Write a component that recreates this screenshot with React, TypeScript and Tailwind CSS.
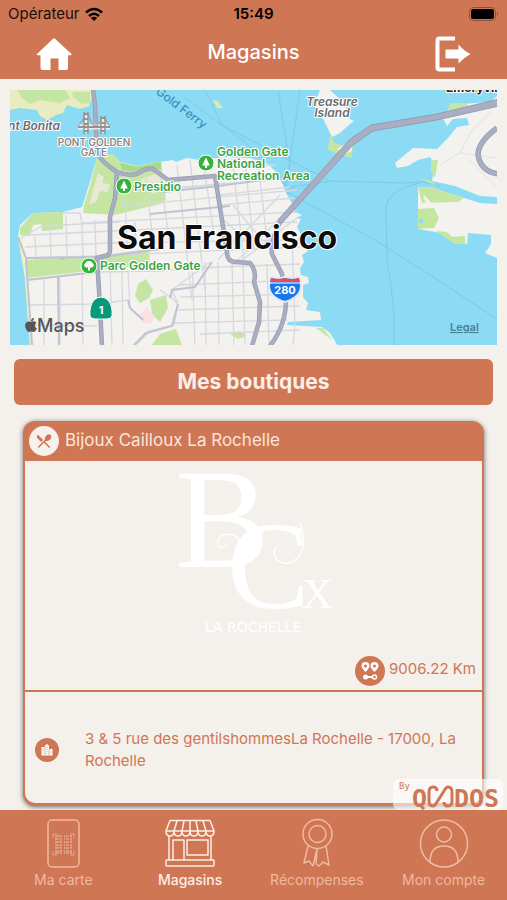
import type { ReactNode } from "react";
import { FaApple } from "react-icons/fa";
import { MdRestaurantMenu } from "react-icons/md";

const LAND = "#f3f2ee";
const PARK = "#c5e5a3";
const STREET = "#d6d8e0";
const ROAD = "#aaaec2";
const ROAD_EDGE = "#979cb2";

const sfCoast =
  "M97 158 L104 154 L113 154 L120 162 L137 166 L160 162 L173 160 L176 162 L187 158 L200 160 L225 157 L250 158 L268 164 L276 172 L283 185 L287 195 L293 205 L295 212 L302 215 L296 218 L301 219 L297 227 L301 235 L298 240 L308 251 L302 255 L304 262 L300 268 L301 275 L308 277 L309 283 L303 285 L303 297 L308 303 L306 310 L320 312 L321 320 L288 322 L287 325 L322 327 L330 333 L338 346 L30 346 L25 278 L18 237 L20 225 L33 213 L63 212 L82 207 L88 188 Z";

const majorRoads = [
  "M93 90 L95 105 L97 152 Q101 162 117 172 Q128 176 137 174 Q145 168 153 169 L168 180 L215 176 L227 252 Q227 262 236 262 L250 263 Q257 271 254 282 L260 302 L259 322 L252 346",
  "M117 172 L115 198 L110 217 L110 250 Q110 256 104 256 L97 258 L99 290 L102 346",
  "M350 143 L280 222 Q270 242 272 254 L282 274 L286 300 Q286 325 270 346",
];

const minorRoads = [
  "M63 213 L80 213 L82 223 L297 212 M30 235 L297 222 M21 238 L42 226 L120 222 M25 247 L110 243 L300 240 M26 258 L97 256 L300 247",
  "M26 280 L97 272 L160 271 L196 268 L300 264 M28 305 L97 304 L128 300 M60 276 L60 346 M44 278 L44 346 M82 275 L83 346 M28 325 L97 326",
  "M145 172 L152 232 M160 175 L170 245 M177 165 L192 300 M190 160 L205 290 M203 160 L214 235 M232 158 L244 260 M245 160 L254 250 M258 163 L267 240",
  "M120 192 L300 178 M120 206 L297 190 M165 190 L225 183 M219 168 L276 165 M219 195 L290 187 M222 205 L294 198",
  "M218 260 L280 195 M230 268 L293 205 M240 262 L298 217 M245 240 L220 216 M262 240 L233 205",
  "M128 272 L130 308 L143 319 M160 290 L172 298 L178 304 L174 325 L150 331 L135 346 M172 290 L210 262 M172 290 L178 304 M178 270 L196 262",
  "M192 262 L195 346 M205 262 L206 346 M218 262 L219 346 M232 262 L234 346 M243 262 L245 346 M267 264 L269 346 M292 235 L295 325 L293 346",
  "M180 285 L300 280 M180 297 L300 294 M178 310 L300 306 M174 323 L287 320 M200 334 L300 330",
  "M66 215 L67 256 M82 223 L83 256 M95 220 L96 256 M35 237 L36 258 M50 228 L51 258 M122 272 L123 346 M110 262 L112 346 M135 222 L136 246 M125 200 L127 246",
];

function ParkPin({ x, y, round }: { x: number; y: number; round?: boolean }) {
  return (
    <g transform={`translate(${x} ${y})`}>
      <circle r="8" fill="#35b33c" stroke="#fff" strokeWidth="1" />
      {round ? (
        <path d="M-1 4.500V1.500H-3a2.300 2.300 0 0 1-1-4 4.300 4.300 0 0 1 8 0 2.300 2.300 0 0 1-1 4H1v3z" fill="#fff" />
      ) : (
        <path d="M0-5.500 3.800 2.500H1V5H-1V2.500H-3.800z" fill="#fff" />
      )}
    </g>
  );
}

function StoreMap() {
  return (
    <svg
      viewBox="10 90 487 255"
      className="block w-full font-[Inter,sans-serif]"
      role="img"
      aria-label="San Francisco"
    >
      <rect x="10" y="90" width="487" height="255" fill="#8bdbf5" />

      {/* ferry lines */}
      <g fill="none" stroke="#7bcae7" strokeWidth="1">
        <path d="M205 90 L222 125 L285 158 L330 181 L405 183 Q425 180 440 186" />
        <path d="M278 90 L290 165 L283 190 L375 240 L430 275 L497 319" />
        <path d="M300 90 L290 160 L286 188 L330 181" />
        <path d="M420 183 Q386 190 386 210 L387 260 Q396 310 394 345" />
        <path d="M185 98 L245 142 L290 190" />
      </g>

      {/* north headlands */}
      <path d="M10 90 H93 L92 98 L89 106 L80 109 L67 105 L63 113 L56 115 L47 120 L40 116 L37 110 L20 108 L10 110Z" fill="#e9ecc0" />
      <path d="M17 90 H65 L70 98 L60 103 L40 100 L30 104 L22 98Z" fill={PARK} />
      <path d="M72 92 L90 92 L90 103 L82 104 L73 97Z" fill={PARK} />
      <path d="M213 100 L218 101 L223 108 L217 108Z" fill="#dcebaa" />

      {/* city */}
      <path d={sfCoast} fill={LAND} />
      <path d="M18 237 L22 238 L34 346 H30 L25 278Z" fill="#f2edc4" />
      <path d="M97 158 L104 154 L113 154 L120 162 L137 166 L161 161 L163 180 L166 200 L160 204 L115 215 L83 213 L84 205 L90 186Z" fill={PARK} />
      <path d="M120 163 L137 167 L161 162 L161 169 L137 172 L122 170Z" fill="#a6d98c" />
      <path d="M98 173 L104 177 L102 183 L110 184 L108 192 L100 191 L96 202 L89 205 L93 190Z M140 180 L160 172 L164 190 L152 194Z" fill="#e6e9d3" />
      <path d="M20 228 L33 213 L63 212 L63 229 L42 231 L41 224 L33 225 L30 236 L20 235Z" fill={PARK} />
      <path d="M25 260 L95 256 L149 249 L150 265 L97 270 L27 278Z" fill={PARK} />
      <path d="M138 284 L146 279 L153 290 L149 298 L140 303 L135 296Z M150 300 L166 295 L168 308 L160 322 L152 314Z" fill={PARK} />
      <path d="M140 314 L147 307 L155 317 L150 324 L142 323Z" fill="#fbdfe2" />
      <path d="M160 334 L176 329 L182 345 H152Z M230 334 L240 331 L247 336 L238 339Z M316 328 L323 328 L332 340Z" fill={PARK} />
      <path d="M60 257 h5 v3 h-5z M84 258 l6 1 -2 2z" fill="#8bdbf5" />
      <g fill="none" stroke={STREET} strokeWidth="1.300">
        {minorRoads.map((d) => (
          <path key={d} d={d} />
        ))}
      </g>
      <path d="M163 192 L219 186 L290 176 M150 214 L230 206 M97 258 L160 249 M26 258 L97 257 M27 280 L97 272 M18 237 L26 258 L32 346 M58 277 L59 346 M178 304 L172 326 L146 333 L133 346 M128 300 L130 308 L143 320 M170 298 L172 290 L195 287 L212 262" fill="none" stroke="#c0c3d2" strokeWidth="2" />

      {/* islands and the east bay */}
      <path d="M320 90 L315 102 L332 137 L340 133 L350 124 L354 121 L348 118 L346 105 L330 90Z" fill={LAND} />
      <path d="M330 135 L328 150 L340 155 L352 158 L353 142 L349 140 L343 146 L335 143Z" fill={PARK} />
      <path d="M337 149 L345 144 L352 141 L352 151 L345 154Z" fill={LAND} />
      <path d="M497 96 L490 102 L462 104 L450 105 L447 112 L438 117 L444 120 L447 126 L453 119 L467 118 L469 125 L457 127 L448 138 L437 149 L413 148 L395 163 L397 168 L408 166 L418 160 L430 157 L435 165 L432 181 L455 186 L480 196 L497 197Z" fill={LAND} />
      <path d="M450 103 L465 103 L470 107 L448 112Z M431 160 L438 160 L435 178 L431 171Z M418 178 L432 181 L437 186Z" fill={PARK} />
      <path d="M418 187 L430 187 L480 203 L497 204 V258 L485 253 L491 244 V235 L468 233 L467 244 L453 243 L447 234 L418 229Z" fill={LAND} />
      <path d="M418 187 L430 187 L464 198 L458 202 L422 203Z M418 209 L434 208 L439 218 L434 228 L418 229Z M436 231 L447 232 L452 237 L465 236 L465 244 L453 243Z" fill={PARK} />
      <path d="M424 196 L430 203 L428 206Z" fill={LAND} stroke={LAND} strokeWidth="2" />
      <path d="M419 219 h4 v4 h-4z" fill="#8bdbf5" />
      <path d="M440 165 L460 153 L497 158 M460 153 L472 130 L490 112 M470 160 L484 175 L497 188" fill="none" stroke="#e0e1e5" strokeWidth="1" />

      <g fill="none" strokeLinejoin="round">
        {majorRoads.map((d) => (
          <path key={d} d={d} stroke={ROAD_EDGE} strokeWidth="4.500" />
        ))}
        {majorRoads.map((d) => (
          <path key={d} d={d} stroke={ROAD} strokeWidth="3" />
        ))}
        <path d="M497 128 Q478 142 478 155 Q481 172 499 174" stroke={ROAD_EDGE} strokeWidth="5.500" />
        <path d="M497 128 Q478 142 478 155 Q481 172 499 174" stroke={ROAD} strokeWidth="4" />
      </g>
      <path d="M499 99 L437 114 L371 125 L349 140 L278 220 L282 223 L353 145 L373 131 L437 120 L499 106Z" fill={ROAD} stroke={ROAD_EDGE} strokeWidth="1" />

      {/* bridge symbol */}
      <g fill="none" stroke="#fff" strokeWidth="5" opacity="0.700">
        <path d="M78 127 H110 M86 113 V133 M103 117 V133" />
      </g>
      <g fill="none" stroke="#9b918c">
        <path d="M78 127 H110" strokeWidth="2" />
        <path d="M84 112 V134 M88 112 V134 M101 116 V134 M105 116 V134" strokeWidth="1.500" />
        <path d="M84 114 h4 M84 119 h4 M84 124 h4 M84 131 h4 M101 118 h4 M101 123 h4 M101 131 h4" strokeWidth="2" />
        <path d="M78 126 Q83 122 85 114 M88 114 Q92 126 95 126 Q99 126 102 117 M105 117 Q107 124 110 126" strokeWidth="1" />
      </g>

      <g stroke="#fff" strokeWidth="2" strokeLinejoin="round" paintOrder="stroke">
        <g fontSize="10" fontWeight="600" fill="#8e8683" textAnchor="middle">
          <text x="94" y="146">PONT GOLDEN</text>
          <text x="94" y="156">GATE</text>
        </g>
        <g fontSize="12" fontWeight="600" fill="#39a445">
          <text x="217" y="156">Golden Gate</text>
          <text x="217" y="168">National</text>
          <text x="217" y="180">Recreation Area</text>
          <text x="134" y="191">Presidio</text>
          <text x="100" y="270">Parc Golden Gate</text>
        </g>
        <g fontSize="12" fontWeight="600" fontStyle="italic" fill="#6a6c72">
          <text x="60" y="130" textAnchor="end">nt Bonita</text>
          <text x="332" y="106" textAnchor="middle">Treasure</text>
          <text x="332" y="117" textAnchor="middle">Island</text>
        </g>
        <text x="446" y="92" fontSize="12" fontWeight="700" fill="#222">Emeryville</text>
        <text x="227" y="249" fontSize="32" fontWeight="700" fill="#0c0c0c" textAnchor="middle">
          San Francisco
        </text>
      </g>
      <text transform="translate(155 93) rotate(37)" fontSize="12" fontWeight="500" fill="#3d8fbe">
        Gold Ferry
      </text>

      <ParkPin x={206} y={163} />
      <ParkPin x={124} y={186} />
      <ParkPin x={89} y={266} round />

      {/* route shields */}
      <path d="M94 300 Q101 294 108 300 Q113 306 112 316 Q111 319 107 319 H95 Q91 319 90 316 Q89 306 94 300Z" fill="#07997c" stroke="#fff" strokeWidth="1" />
      <text x="101" y="314" fontSize="11" fontWeight="700" fill="#fff" textAnchor="middle">1</text>
      <path d="M271 277 Q278 279 285 277 Q292 279 299 277 Q303 287 299 293 Q295 299 285 302 Q275 299 271 293 Q267 287 271 277Z" fill="#1a76ee" stroke="#dbe9fb" strokeWidth="2" />
      <path d="M271 278 Q278 280 285 278 Q292 280 299 278 L300 282 H270Z" fill="#ee4a4e" />
      <path d="M269 283 H301" stroke="#fff" strokeWidth="1" />
      <text x="285" y="294" fontSize="11" fontWeight="700" fill="#fff" textAnchor="middle">280</text>

      <FaApple x={23} y={317} width={14} height={16} color="#55565a" />
      <text x="37" y="332" fontSize="18" fontWeight="500" fill="#55565a">Maps</text>
      <a href="#legal">
        <text x="450" y="331" fontSize="11" fontWeight="600" fill="#4e8095" textDecoration="underline">
          Legal
        </text>
      </a>
    </svg>
  );
}

function StatusBar() {
  return (
    <div className="grid h-7 grid-cols-3 items-center px-2 text-[15px] text-[#1c0f0a]">
      <div className="flex items-center gap-1">
        Opérateur
        <svg viewBox="0 0 20 15" className="h-[15px] w-5" fill="none" stroke="#000" aria-hidden="true">
          <path d="M2 5.500 Q10-1.500 18 5.500" strokeWidth="2.500" />
          <path d="M5 9 Q10 4.500 15 9" strokeWidth="2.500" />
          <path d="M10 14 L6.800 11 Q10 8.300 13.200 11Z" fill="#000" stroke="none" />
        </svg>
      </div>
      <div className="text-center font-semibold text-black">15:49</div>
      <svg viewBox="0 0 30 14" className="h-3.5 w-[30px] justify-self-end" aria-hidden="true">
        <rect x="0.500" y="0.500" width="26" height="13" rx="4" fill="none" stroke="#8c4f38" />
        <rect x="2" y="2" width="23" height="10" rx="2.500" />
        <path d="M28 5 Q30 7 28 9Z" fill="#8c4f38" />
      </svg>
    </div>
  );
}

function Header() {
  return (
    <header className="shrink-0 bg-[#cf7654]">
      <StatusBar />
      <div className="flex h-[51px] items-center justify-between px-9 text-white">
        <button type="button" aria-label="Accueil">
          <svg viewBox="0 0 36 34" className="h-[34px] w-9" fill="currentColor">
            <path d="M17.300 1.500 Q18 1 18.700 1.500 L35.500 17 Q36 18 35 18.200 H32 V31 Q32 33 30 33 H22.500 V21.500 H14.500 V33 H6.500 Q4.500 33 4.500 31 V18.200 H1.500 Q0 18 1 17Z" />
          </svg>
        </button>
        <h1 className="pb-1 text-xl font-medium">Magasins</h1>
        <button type="button" aria-label="Déconnexion">
          <svg viewBox="0 0 36 36" className="size-9" fill="none" stroke="currentColor">
            <path d="M20 2.500 H4.500 Q2.500 2.500 2.500 4.500 V31.500 Q2.500 33.500 4.500 33.500 H20" strokeWidth="4" />
            <path d="M10.500 13.500 H23.500 V8.500 Q29 15 35.500 18 Q29 21.500 23.500 27.500 V22.500 H10.500Z" fill="currentColor" stroke="none" />
          </svg>
        </button>
      </div>
    </header>
  );
}

function BrandLogo() {
  return (
    <svg viewBox="0 0 170 180" className="h-[180px] w-[170px] overflow-visible" fill="#fff" fontFamily="'Liberation Serif', serif">
      <text x="6" y="106" fontSize="142">B</text>
      <text x="58" y="147" fontSize="124">C</text>
      <text x="133" y="147" fontSize="43">X</text>
      <g fill="none" stroke="#fff" strokeWidth="1.500">
        <path d="M72 92 Q74 75 60 73 Q46 75 49 84 Q54 90 58 83" />
        <path d="M131 62 Q138 82 131 94 Q120 108 108 99 Q102 91 108 86" />
      </g>
      <text x="84" y="171" fontSize="14" textAnchor="middle" fontFamily="'DejaVu Sans', sans-serif">
        LA ROCHELLE
      </text>
    </svg>
  );
}

function DistanceIcon() {
  return (
    <svg viewBox="0 0 30 30" className="size-[30px]" aria-hidden="true">
      <circle cx="15" cy="15" r="15" fill="#cf7654" />
      <g fill="#fff">
        <path d="M10.500 16 Q6.500 12 6.500 10 a4 4 0 0 1 8 0 Q14.500 12 10.500 16Z M19.500 16 Q15.500 12 15.500 10 a4 4 0 0 1 8 0 Q23.500 12 19.500 16Z" />
        <circle cx="10.500" cy="21" r="2.500" />
      </g>
      <path d="M10 21 H18" stroke="#fff" strokeWidth="2" />
      <circle cx="19.500" cy="21" r="2" fill="none" stroke="#fff" strokeWidth="1.500" />
      <circle cx="10.500" cy="10" r="1.500" fill="#cf7654" />
      <circle cx="19.500" cy="10" r="1.500" fill="#cf7654" />
    </svg>
  );
}

function CityIcon() {
  return (
    <svg viewBox="0 0 24 24" className="size-6 shrink-0" aria-hidden="true">
      <circle cx="12" cy="12" r="12" fill="#cf7654" />
      <path d="M6.500 9 H10 V7.500 L12 6 L14 7.500 V11 H17.500 V17.500 H6.500Z" fill="#fff" />
      <path d="M10 9 V17 M14 11 V17" stroke="#cf7654" strokeWidth="0.600" />
      <path d="M8.200 10.500 V16 M12 9 V16 M15.800 12.500 V16" stroke="#cf7654" strokeWidth="0.600" strokeDasharray="1 1" />
    </svg>
  );
}

function StoreCard() {
  return (
    <article className="mx-[13px] mt-4 overflow-hidden rounded-xl bg-[#cf7654] px-[2px] pb-[3px] text-[#cf7654] shadow-[0_1px_5px_rgba(0,0,0,0.55)]">
      <div className="flex h-10 items-center gap-1.5 px-1 text-[#f8e6dd]">
        <span className="flex size-[30px] items-center justify-center rounded-full bg-[#f7f1ee] text-[#cf7654]">
          <MdRestaurantMenu className="size-[18px]" />
        </span>
        <h3 className="text-[17px]">Bijoux Cailloux La Rochelle</h3>
      </div>
      <div className="flex h-[229px] flex-col items-center bg-[#f4f0ec]">
        <BrandLogo />
        <div className="mt-auto flex items-center gap-1 self-end pr-1.5 pb-1 text-[15px]">
          <DistanceIcon />
          <span className="pb-1">9006.22 Km</span>
        </div>
      </div>
      <div className="mt-[2px] flex h-[111px] items-center gap-[26px] rounded-b-[10px] bg-[#f4f0ec] pt-2 pr-6 pb-1 pl-2.5">
        <CityIcon />
        <p className="text-[15px] leading-[22px]">
          3 &amp; 5 rue des gentilshommesLa Rochelle - 17000, La Rochelle
        </p>
      </div>
    </article>
  );
}

function QoodosBadge() {
  return (
    <div className="absolute right-1 bottom-0 rounded-md bg-white/60">
      <svg viewBox="0 0 110 31" className="h-[31px] w-[110px]" fill="#cf7654" fontFamily="'DejaVu Sans Mono', monospace">
        <text x="6" y="10" fontSize="9">By</text>
        <text x="19" y="28" fontSize="25" fontWeight="700">Q</text>
        <path d="M44 12 Q44 8 40 8 Q36 8 36 13 V22 Q36 27 40 27 Q42 27 44 23 L51 12 Q53 8 55 8 Q59 8 59 13 V22 Q59 27 55 27 Q51 27 51 23" fill="none" stroke="#cf7654" strokeWidth="3" />
        <text x="61" y="28" fontSize="25" fontWeight="700">DOS</text>
      </svg>
    </div>
  );
}

function TabIcon({ children }: { children: ReactNode }) {
  return (
    <svg viewBox="0 0 50 50" className="size-[50px]" fill="none" stroke="currentColor" strokeWidth="2" strokeLinejoin="round" aria-hidden="true">
      {children}
    </svg>
  );
}

const tabs = [
  {
    label: "Ma carte",
    icon: (
      <>
        <rect x="10" y="2" width="31" height="47" rx="4" strokeWidth="1.500" />
        <path d="M15 20 V16 H19 M32 16 H36 V20 M15 33 V37 H19 M32 37 H36 V33" strokeWidth="1" opacity="0.700" />
        <path d="M17 18 H34 M17 21 H34 M17 24 H34 M17 27 H34 M17 30 H34 M17 33 H34 M17 35 H34" strokeWidth="2" strokeDasharray="4 1 2 2 1 1 3 1" opacity="0.500" />
        <path d="M18 18 V35 M22 17 V36 M27 18 V35 M33 17 V36" strokeWidth="1" strokeDasharray="3 2" opacity="0.500" />
      </>
    ),
  },
  {
    label: "Magasins",
    active: true,
    icon: (
      <>
        <path d="M5 2.500 H45 L49 13 Q49 18 45 18 Q41 18 41 13 Q41 18 37 18 Q33 18 33 13 Q33 18 29 18 Q25 18 25 13 Q25 18 21 18 Q17 18 17 13 Q17 18 13 18 Q9 18 9 13 Q9 18 5 18 Q1 18 1 13Z M1 13 H49 M12 3 L9 13 M19 3 L17 13 M25 3 V13 M31 3 L33 13 M38 3 L41 13" strokeWidth="1.500" />
        <path d="M4 18 V42 M46 18 V42 M8 42 V22 H19 V42 M22 22 H43 V37 H22Z" strokeWidth="1.500" />
        <rect x="1" y="42" width="48" height="6" rx="1" strokeWidth="1.500" />
      </>
    ),
  },
  {
    label: "Récompenses",
    icon: (
      <>
        <circle cx="25.500" cy="16" r="14.500" strokeWidth="1.500" />
        <circle cx="25.500" cy="16" r="8.500" strokeWidth="1.500" />
        <path d="M16 28 L12 45 L17 43 L21 48 L25 31 M25 31 L24 46 L27 48 L31 44 L37 47 L34 28" strokeWidth="1.500" />
      </>
    ),
  },
  {
    label: "Mon compte",
    icon: (
      <>
        <circle cx="25" cy="25.500" r="23.500" strokeWidth="1.500" />
        <circle cx="25" cy="16.500" r="7.500" strokeWidth="1.500" />
        <path d="M11 44 Q11 28 25 28 Q39 28 39 44" strokeWidth="1.500" />
      </>
    ),
  },
];

export default function App() {
  return (
    <div className="flex h-dvh flex-col bg-[#f4f0ec] font-[Inter,sans-serif]">
      <Header />
      <div className="relative flex min-h-0 flex-1 flex-col">
        <main className="flex-1 overflow-hidden px-2.5 pt-[11px]">
          <StoreMap />
          <h2 className="mx-1 mt-3.5 rounded-md bg-[#cf7654] py-2 text-center text-[21px] leading-[30px] font-bold text-[#fbeee8]">
            Mes boutiques
          </h2>
          <StoreCard />
        </main>
        <QoodosBadge />
      </div>
      <nav className="grid h-[90px] shrink-0 grid-cols-4 bg-[#cf7654] text-sm">
        {tabs.map((t) => (
          <a
            key={t.label}
            href="#"
            aria-current={t.active ? "page" : undefined}
            className={
              t.active
                ? "flex flex-col items-center pt-2 font-medium text-[#fdeee6]"
                : "flex flex-col items-center pt-2 text-[#f0b9a1]"
            }
          >
            <TabIcon>{t.icon}</TabIcon>
            <span className="mt-0.5">{t.label}</span>
          </a>
        ))}
      </nav>
    </div>
  );
}
